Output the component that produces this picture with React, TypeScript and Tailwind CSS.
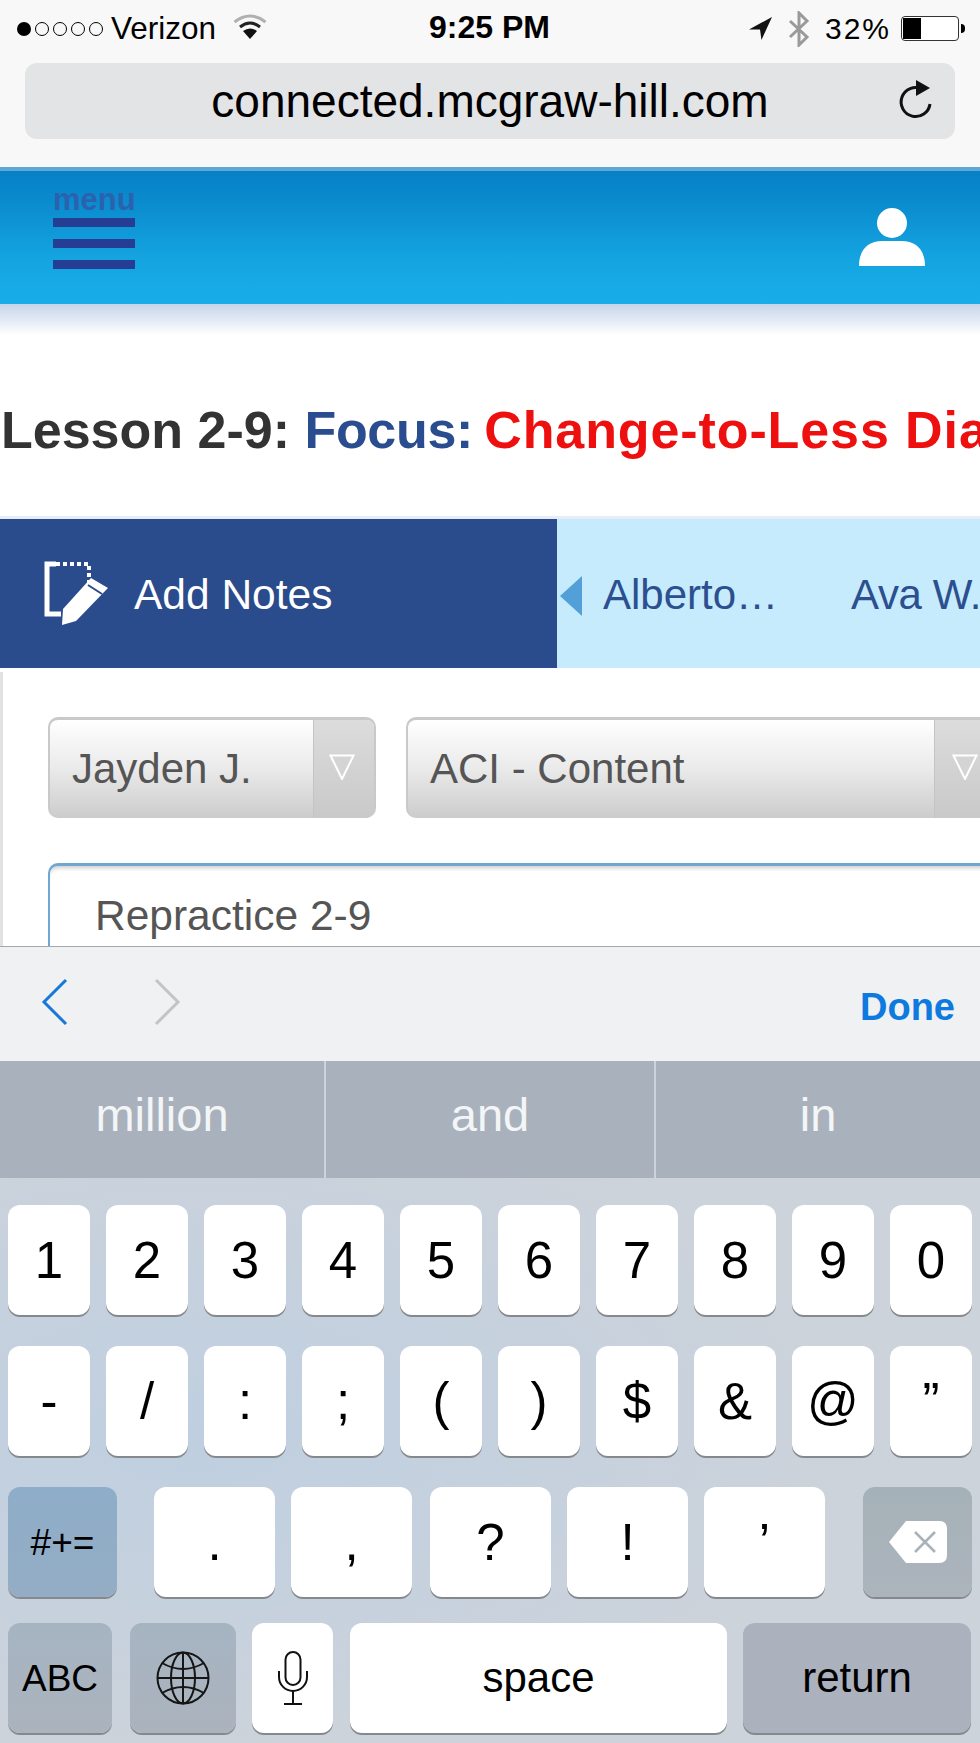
import React from "react";

const font = { fontFamily: '"Liberation Sans", Arial, sans-serif' };

function Key({ children, w, cls = "bg-white", text = "text-[51px]" }: { children: React.ReactNode; w: string; cls?: string; text?: string }) {
  return (
    <div className={`${w} ${cls} ${text} h-[110px] shrink-0 rounded-[12px] shadow-[0_2px_0_#85888d] flex items-center justify-center text-black leading-none`}>
      {children}
    </div>
  );
}

function Arrow() {
  return (
    <svg width="26" height="26" viewBox="0 0 26 26" className="mt-[-5px] ml-[-4px]">
      <polygon points="1.5,1.5 24.5,1.5 13,25" fill="#d4d4d4" stroke="#ffffff" strokeWidth="2" />
    </svg>
  );
}

function Select({ label, w, arrow }: { label: string; w: string; arrow: string }) {
  return (
    <div className={`${w} shrink-0 h-[101px] rounded-[10px] border-t-[3px] border-x-2 border-[#c9c9c9] bg-gradient-to-b from-white via-[#eaeaea] to-[#cccccc] flex overflow-hidden`}>
      <div className="flex-1 flex items-center pl-[22px] pb-[1px] text-[42px] text-[#555555]">{label}</div>
      <div className={`${arrow} bg-gradient-to-b from-[#dcdcdc] to-[#c9c9c9] border-l border-[#c4c4c4] flex items-center justify-center`}>
        <Arrow />
      </div>
    </div>
  );
}

export default function App() {
  const row1 = ["1", "2", "3", "4", "5", "6", "7", "8", "9", "0"];
  const row2 = ["-", "/", ":", ";", "(", ")", "$", "&", "@", "”"];
  const row3 = [".", ",", "?", "!", "’"];
  return (
    <div style={font} className="w-[980px] h-[1743px] overflow-hidden bg-white flex flex-col">
      {/* status bar */}
      <div className="h-[167px] bg-[#f8f8f8] shrink-0 flex flex-col">
        <div className="h-[57px] relative flex items-center pl-[17px] pr-[15px] text-black">
          <div className="flex gap-[4px] items-center">
            <span className="w-[14px] h-[14px] rounded-full bg-black" />
            <span className="w-[14px] h-[14px] rounded-full border border-black" />
            <span className="w-[14px] h-[14px] rounded-full border border-black" />
            <span className="w-[14px] h-[14px] rounded-full border border-black" />
            <span className="w-[14px] h-[14px] rounded-full border border-black" />
          </div>
          <span className="ml-[8px] text-[31.5px] leading-none">Verizon</span>
          <svg width="34" height="26" viewBox="0 0 34 26" className="ml-[17px] mb-[4px]">
            <path d="M1.5 8 Q17 -4 32.5 8" fill="none" stroke="#b0b0b0" strokeWidth="3" />
            <path d="M7 13 Q17 5 27 13" fill="none" stroke="#222" strokeWidth="3" />
            <path d="M10 17 Q17 12 24 17 L17 25 Z" fill="#111" />
          </svg>
          <span className="absolute left-[429px] top-[10px] text-[32px] font-bold leading-[34px]">9:25 PM</span>
          <div className="ml-auto flex items-center">
            <svg width="23" height="23" viewBox="0 0 24 24" className="mr-[16px]">
              <path d="M0 13 L24 0 L13 24 L11.5 13 Z" fill="#111" />
            </svg>
            <svg width="22" height="36" viewBox="0 0 22 36" className="mr-[15px]">
              <path d="M2 10 L19 26 L11 34 V2 L19 10 L2 26" fill="none" stroke="#9a9a9a" strokeWidth="3" />
            </svg>
            <span className="text-[30px] leading-none tracking-[2px] mr-[10px]">32%</span>
            <div className="w-[58px] h-[25px] rounded-[4px] border border-[#333] p-[1px] bg-white">
              <div className="w-[18px] h-full bg-black" />
            </div>
            <div className="w-[4px] h-[9px] bg-black rounded-r-full ml-[2px]" />
          </div>
        </div>
        <div className="mx-[25px] mt-[6px] h-[76px] rounded-[12px] bg-[#e3e4e6] relative flex items-center justify-center">
          <span className="text-[46px] leading-none text-black">connected.mcgraw-hill.com</span>
          <svg width="38" height="42" viewBox="0 0 38 42" className="absolute right-[20px] top-[16px]">
            <path d="M27 9 A14.5 14.5 0 1 0 35 24" fill="none" stroke="#111" strokeWidth="3" transform="translate(-2 1)" />
            <path d="M19 1 L33 9 L19 17 Z" fill="#111" />
          </svg>
        </div>
      </div>

      {/* blue header */}
      <div className="h-[137px] shrink-0 border-t-[4px] border-[#5ea8d8] bg-[linear-gradient(180deg,#0780c6_0%,#0b8ccf_25%,#14a4e0_65%,#18aeea_100%)] flex items-start justify-between pl-[53px] pr-[53px]">
        <div className="w-[82px] pt-[14px] flex flex-col">
          <span className="text-[31px] font-bold leading-[30px] text-[#2a62ae] whitespace-nowrap">menu</span>
          <div className="mt-[3px] flex flex-col gap-[12px]">
            <div className="h-[9px] bg-[#263d94]" />
            <div className="h-[9px] bg-[#263d94]" />
            <div className="h-[9px] bg-[#263d94]" />
          </div>
        </div>
        <svg width="68" height="60" viewBox="0 0 68 60" className="mt-[37px] mr-[1px]">
          <circle cx="34" cy="15" r="15" fill="#fff" />
          <path d="M1 58 C1 42 10 33 24 33 H44 C58 33 67 42 67 58 Z" fill="#fff" />
        </svg>
      </div>
      <div className="h-[31px] shrink-0 bg-gradient-to-b from-[#c6d4e9] to-white" />

      {/* title */}
      <div className="h-[184px] shrink-0 flex items-center pl-[1px] pt-[9px] whitespace-nowrap text-[52px] font-bold border-b-[3px] border-[#e6edf7]">
        <span className="text-[#333333]">Lesson 2-9:&nbsp;</span>
        <span className="text-[#2a4d8f] tracking-[-0.3px]">Focus:&nbsp;</span>
        <span className="text-[#ee0f0f] tracking-[0.9px] ml-[-3px]">Change-to-Less Diagrams</span>
      </div>

      {/* tabs */}
      <div className="h-[149px] shrink-0 flex">
        <div className="w-[557px] shrink-0 bg-[#2a4b8c] flex items-center pl-[44px] text-white">
          <svg width="65" height="65" viewBox="0 0 65 65">
            <path d="M12 3 H3 V53 H17" fill="none" stroke="#fff" strokeWidth="5" />
            <path d="M12 3 H45 V22" fill="none" stroke="#fff" strokeWidth="4" strokeDasharray="4 3" />
            <path d="M47 17 L64 27 L32 60 L18 64 L19 48 Z" fill="#fff" />
            <path d="M44 24 L58 33" stroke="#2a4b8c" strokeWidth="2" />
          </svg>
          <span className="ml-[25px] mt-[3px] text-[42.5px] leading-none">Add Notes</span>
        </div>
        <div className="flex-1 min-w-0 bg-[#c5ebfc] flex items-center whitespace-nowrap text-[42px] text-[#2b4f8f]">
          <svg width="22" height="40" viewBox="0 0 22 40" className="ml-[3px] mt-[4px] shrink-0">
            <polygon points="22,0 22,40 0,20" fill="#539fd8" />
          </svg>
          <span className="ml-[21px] mt-[2px]">Alberto…</span>
          <span className="ml-[73px] mt-[2px] tracking-[-0.4px]">Ava W.</span>
        </div>
      </div>

      {/* form */}
      <div className="flex-1 min-h-0 relative overflow-hidden border-l-[3px] border-[#e2e2e2] mt-[4px] pl-[45px] pt-[45px]">
        <div className="flex gap-[30px]">
          <Select label="Jayden J." w="w-[328px]" arrow="w-[61px]" />
          <Select label="ACI - Content" w="w-[594px]" arrow="w-[64px]" />
        </div>
        <div className="mt-[45px] w-[1000px] h-[140px] rounded-[10px] border-t-[3px] border-l-[2px] border-[#6ea7d2] pl-[45px] pt-[25px] text-[42.5px] text-[#555555] leading-[50px] shadow-[inset_0_5px_4px_-3px_#cccccc]">
          Repractice 2-9
        </div>
      </div>
      <div className="h-[797px] shrink-0 flex flex-col">
        <div className="h-[1px] bg-[#a6a8ab] shrink-0" />
        {/* accessory */}
        <div className="h-[114px] shrink-0 bg-[#f0f1f3] flex items-center pl-[41px] pr-[25px]">
          <svg width="28" height="48" viewBox="0 0 28 48" className="mt-[-4px]">
            <path d="M25 2 L3 24 L25 46" fill="none" stroke="#1878d8" strokeWidth="3" />
          </svg>
          <svg width="28" height="48" viewBox="0 0 28 48" className="ml-[84px] mt-[-4px]">
            <path d="M3 2 L25 24 L3 46" fill="none" stroke="#c4c4c4" strokeWidth="3" />
          </svg>
          <span className="ml-auto text-[38px] font-bold text-[#0e7ae0] leading-none mt-[6px]">Done</span>
        </div>
        {/* suggestions */}
        <div className="h-[117px] shrink-0 bg-[#a9b2bc] flex text-[47px] text-[#f3f5f7]">
          <div className="w-[326px] flex items-center justify-center border-r-[2px] border-[#cdd3da] pb-[8px]">million</div>
          <div className="w-[330px] flex items-center justify-center border-r-[2px] border-[#cdd3da] pb-[8px]">and</div>
          <div className="flex-1 flex items-center justify-center pb-[8px]">in</div>
        </div>
        {/* keyboard */}
        <div className="flex-1 min-h-0 px-[8px] pt-[27px] bg-[radial-gradient(ellipse_70%_60%_at_20%_45%,#bfcfe0_0%,#c6d1de_50%,#cdd3da_100%)] flex flex-col">
          <div className="flex gap-[16px]">
            {row1.map((k) => <Key key={k} w="w-[82px]">{k}</Key>)}
          </div>
          <div className="flex gap-[16px] mt-[31px]">
            {row2.map((k) => <Key key={k} w="w-[82px]">{k}</Key>)}
          </div>
          <div className="flex mt-[31px]">
            <Key w="w-[109px]" cls="bg-gradient-to-b from-[#8eadc8] to-[#94adc5] mr-[37px]" text="text-[37px]">#+=</Key>
            <Key w="w-[121px]" cls="bg-white mr-[16px]">{row3[0]}</Key>
            <Key w="w-[121px]" cls="bg-white mr-[18px]">{row3[1]}</Key>
            <Key w="w-[121px]" cls="bg-white mr-[16px]">{row3[2]}</Key>
            <Key w="w-[121px]" cls="bg-white mr-[16px]">{row3[3]}</Key>
            <Key w="w-[121px]" cls="bg-white mr-[38px]">{row3[4]}</Key>
            <Key w="w-[109px]" cls="bg-gradient-to-b from-[#a5b1b8] to-[#acb4bc]">
              <svg width="58" height="42" viewBox="0 0 58 42">
                <path d="M17 0 H50 Q58 0 58 8 V34 Q58 42 50 42 H17 L0 21 Z" fill="#fff" />
                <path d="M26 11 L46 31 M46 11 L26 31" stroke="#a8b2b9" strokeWidth="2.5" />
              </svg>
            </Key>
          </div>
          <div className="flex mt-[26px]">
            <Key w="w-[104px]" cls="bg-gradient-to-b from-[#a6b4c2] to-[#abb3bd] mr-[18px]" text="text-[37px]">ABC</Key>
            <Key w="w-[106px]" cls="bg-gradient-to-b from-[#a6b4c2] to-[#abb3bd] mr-[16px]">
              <svg width="54" height="54" viewBox="0 0 54 54" fill="none" stroke="#151515" strokeWidth="2">
                <circle cx="27" cy="27" r="25.5" />
                <ellipse cx="27" cy="27" rx="12" ry="25.5" />
                <path d="M27 1.5 V52.5 M1.5 27 H52.5" />
                <path d="M6 12 Q27 24 48 12 M6 42 Q27 30 48 42" />
              </svg>
            </Key>
            <Key w="w-[81px]" cls="bg-white mr-[17px]">
              <svg width="30" height="54" viewBox="0 0 30 54" fill="none" stroke="#111" strokeWidth="2">
                <rect x="7.5" y="1" width="15" height="33" rx="7.5" />
                <path d="M1 20 V26 A14 14 0 0 0 29 26 V20" />
                <path d="M15 40 V52 M6 53 H24" />
              </svg>
            </Key>
            <Key w="w-[377px]" cls="bg-white mr-[16px]" text="text-[42px]">space</Key>
            <Key w="w-[228px]" cls="bg-[#abb2bd]" text="text-[42px]">return</Key>
          </div>
        </div>
      </div>
    </div>
  );
}
